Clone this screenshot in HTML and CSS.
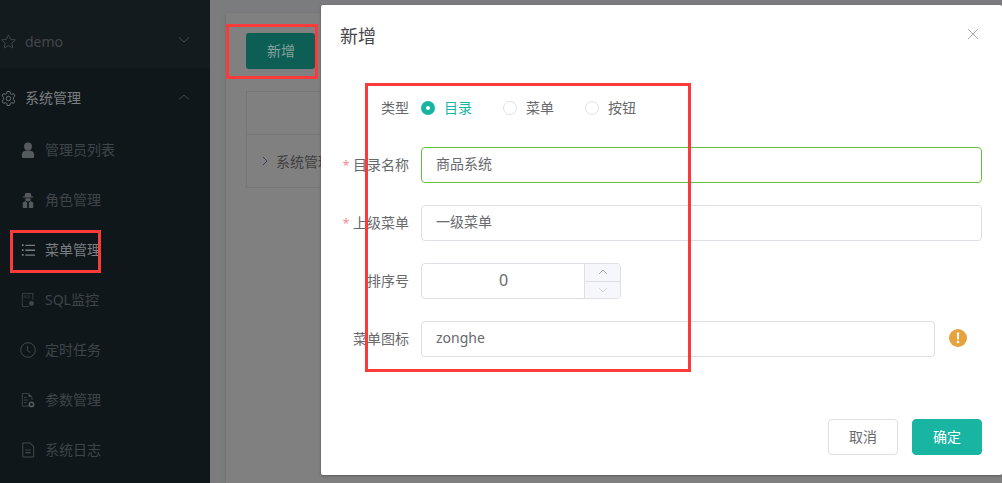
FILE: index.html
```html
<!DOCTYPE html>
<html lang="zh-CN">
<head>
<meta charset="utf-8">
<title>菜单管理</title>
<link rel="stylesheet" href="styles.css">
</head>
<body>
<div class="app">
  <aside class="sidebar">
    <div class="menu-title top">
      <svg class="root-icon" viewBox="0 0 16 16"><path d="M8 .9l2.200 4.700 5.100.7-3.700 3.500 1 5.100L8 12.400l-4.600 2.500 1-5.100L.7 6.300l5.100-.7z" fill="none" stroke="#41484b" stroke-width="1"/></svg>
      <span class="name latin-name">demo</span>
      <svg class="chev" viewBox="0 0 12 8"><path d="M1 1.500l5 4.500 5-4.500" fill="none" stroke="#41484b"/></svg>
    </div>
    <div class="menu-title open">
      <svg class="root-icon" viewBox="0.8 0.3 14.400 15.400"><path d="M6.600.8h2.800l.4 2.100 1.400.8 2-.7 1.400 2.400-1.600 1.400v2.400l1.600 1.400-1.400 2.400-2-.7-1.400.8-.4 2.100H6.600l-.4-2.100-1.400-.8-2 .7-1.400-2.400L3 9.200V6.800L1.400 5.400 2.800 3l2 .7 1.400-.8z" fill="none" stroke="#6d7275" stroke-width="1"/><circle cx="8" cy="8" r="2.300" fill="none" stroke="#6d7275" stroke-width="1"/></svg>
      <span class="name bright">系统管理</span>
      <svg class="chev" viewBox="0 0 12 8"><path d="M1 6.500l5-4.500 5 4.500" fill="none" stroke="#41484b"/></svg>
    </div>
    <nav class="submenu">
      <div class="sub"><svg class="sub-icon" viewBox="0 0 16 18"><circle cx="8" cy="5" r="4.500" fill="#555a5d"/><path d="M1 17v-3c0-3 3-4.500 7-4.500s7 1.500 7 4.500v3c0 .5-.5 1-1 1H2c-.5 0-1-.5-1-1z" fill="#555a5d"/></svg><span class="sub-text">管理员列表</span></div>
      <div class="sub"><svg class="sub-icon" viewBox="0 0 16 18"><path d="M5 1h6l1 4h2v1H2V5h2zM5 7h6v2.500L8 11 5 9.500zM2 12l3-2 2 2v6H3c-.6 0-1-.4-1-1zM14 12l-3-2-2 2v6h4c.6 0 1-.4 1-1z" fill="#555a5d"/></svg><span class="sub-text">角色管理</span></div>
      <div class="sub"><svg class="sub-icon" viewBox="0 0 16 18"><path d="M1 2.500h2v2H1zM5 3h11v1.500H5zM1 8h2v2H1zM5 8.500h11V10H5zM1 13.500h2v2H1zM5 14h11v1.500H5z" fill="#797c7e"/></svg><span class="sub-text hot">菜单管理</span></div>
      <div class="sub"><svg class="sub-icon" viewBox="0 0 16 18"><path d="M1.500 1.500h12v7M9 16.500H1.500v-15" fill="none" stroke="#3f4548"/><circle cx="12" cy="13" r="2.800" fill="#3f4548"/><text class="tiny" x="2.500" y="7">SQL</text></svg><span class="sub-text">SQL监控</span></div>
      <div class="sub"><svg class="clock" viewBox="0 0 16 16"><circle cx="8" cy="8" r="7.300" fill="none" stroke="#43494c" stroke-width="1"/><path d="M7.500 4v4.500l2.500 2" fill="none" stroke="#43494c" stroke-width="1"/></svg><span class="sub-text">定时任务</span></div>
      <div class="sub"><svg class="sub-icon" viewBox="0 0 16 18"><path d="M9 16H1.500V1.500h7l4 4V9" fill="none" stroke="#43494c"/><path d="M8.500 1.500l4 4h-4z" fill="#43494c"/><path d="M3.500 6h3M3.500 9h5M3.500 12h3" stroke="#43494c"/><circle cx="12" cy="14" r="2.500" fill="none" stroke="#555a5d" stroke-width="1.800"/></svg><span class="sub-text">参数管理</span></div>
      <div class="sub"><svg class="sub-icon" viewBox="0 0 16 18"><path d="M2.500 1h8l4 4v11.500c0 .3-.2.500-.5.500H2.500c-.3 0-.5-.2-.5-.5v-15c0-.3.200-.5.500-.5z" fill="none" stroke="#43494c" stroke-width="1.200"/><path d="M5 9h6M5 12h6" stroke="#43494c" stroke-width="1.200"/></svg><span class="sub-text">系统日志</span></div>
    </nav>
  </aside>
  <main class="main">
    <section class="card">
      <button class="add-btn" type="button">新增</button>
      <div class="table">
        <div class="thead"></div>
        <div class="row">
          <svg class="row-chev" viewBox="0 0 6 10"><path d="M1 1l4 4-4 4" fill="none" stroke="#3f4058"/></svg>
          <span class="row-text">系统管理</span>
        </div>
      </div>
    </section>
  </main>

  <div class="modal">
    <header class="modal-head">
      <h2 class="modal-title">新增</h2>
      <svg class="close" viewBox="0 0 12 12"><path d="M1 1l10 10M11 1L1 11" fill="none" stroke="#a9abb5" stroke-width="1"/></svg>
    </header>
    <form class="form">
      <div class="field field-radio">
        <label class="label">类型</label>
        <div class="radios">
          <span class="radio on"><i class="dot checked"></i><span class="radio-text">目录</span></span>
          <span class="radio"><i class="dot"></i><span class="radio-text">菜单</span></span>
          <span class="radio"><i class="dot"></i><span class="radio-text">按钮</span></span>
        </div>
      </div>
      <div class="field">
        <label class="label"><b class="req">*</b> 目录名称</label>
        <div class="input valid">商品系统</div>
      </div>
      <div class="field">
        <label class="label"><b class="req">*</b> 上级菜单</label>
        <div class="input">一级菜单</div>
      </div>
      <div class="field">
        <label class="label">排序号</label>
        <div class="number">
          <div class="num-value">0</div>
          <div class="num-ctrl">
            <span class="step"><svg class="step-icon" viewBox="0 0 10 6"><path d="M1 5l4-4 4 4" fill="none" stroke="#a9abb5"/></svg></span>
            <span class="step"><svg class="step-icon" viewBox="0 0 10 6"><path d="M1 1l4 4 4-4" fill="none" stroke="#d4d6dd"/></svg></span>
          </div>
        </div>
      </div>
      <div class="field">
        <label class="label">菜单图标</label>
        <div class="input latin">zonghe</div>
        <svg class="warn" viewBox="0 0 18 18"><circle cx="9" cy="9" r="9" fill="#e6a23c"/><path d="M7.800 3.500h2.400l-.4 7H8.200z" fill="#fff"/><circle cx="9" cy="13" r="1.300" fill="#fff"/></svg>
      </div>
    </form>
    <footer class="modal-foot">
      <button class="btn" type="button">取消</button>
      <button class="btn primary" type="button">确定</button>
    </footer>
  </div>

  <div class="mark mark-add"></div>
  <div class="mark mark-menu"></div>
  <div class="mark mark-form"></div>
</div>
</body>
</html>
```

FILE: styles.css
```css
* { box-sizing: border-box; }
html, body { margin: 0; padding: 0; height: 100%; overflow: hidden; }
body {
  font-family: "Noto Sans", "Noto Sans CJK SC", sans-serif;
  font-size: 14px;
  background: #7a7c7d;
}
.app { position: relative; display: flex; width: 1002px; height: 483px; overflow: hidden; }

.sidebar { width: 210px; flex: none; background: #10171b; }
.menu-title { display: flex; align-items: center; padding-left: 1px; color: #41474a; }
.menu-title.top { height: 68px; padding-top: 14px; background: #141b1f; }
.menu-title.open { height: 57px; padding-top: 3px; }
.root-icon { width: 15px; height: 15px; flex: none; }
.name { margin-left: 9px; flex: 1; padding-bottom: 2px; }
.latin-name { padding-bottom: 0; }
.bright { color: #7b7f81; }
.chev { width: 12px; height: 8px; margin-right: 20px; margin-top: -3px; flex: none; }
.submenu { display: flex; flex-direction: column; }
.sub { display: flex; align-items: center; height: 50px; padding-left: 21px; color: #3e4548; }
.sub-text { padding-bottom: 2px; }
.sub-icon { width: 14px; height: 16px; flex: none; margin-right: 10px; }
.clock { width: 16px; height: 16px; flex: none; margin: 0 9px 0 -1px; }
.hot { color: #7b7f81; }
.tiny { font-size: 4.500px; fill: #43494c; font-family: "Liberation Sans", sans-serif; }

.main { flex: 1; padding: 13px 0 0 16px; background: #7a7c7d; }
.card { height: 470px; padding: 20px; background: #808080; box-shadow: -1px 0 2px rgba(0,0,0,.08); }
.add-btn {
  display: block; width: 69px; height: 36px; padding: 0 0 2px 1px; border: 0; border-radius: 3px;
  background: #0d5f55; color: #85a29d; font: inherit;
}
.table { margin-top: 22px; border: 1px solid #757677; width: 200px; }
.thead { height: 43px; border-bottom: 1px solid #757677; }
.row { display: flex; align-items: center; height: 52px; padding-left: 15px; color: #3f3f3f; }
.row-chev { width: 6px; height: 10px; margin-right: 8px; flex: none; }
.row-text { white-space: nowrap; }

.modal {
  position: absolute; left: 321px; top: 5px; width: 681px; height: 470px;
  display: flex; flex-direction: column; background: #fff; border-radius: 2px;
  box-shadow: 0 1px 3px rgba(0,0,0,.3);
}
.modal-head { display: flex; align-items: center; justify-content: space-between; height: 62px; padding: 0 23px 0 19px; }
.modal-title { margin: 0 0 2px; font-size: 18px; font-weight: 400; color: #46474a; }
.close { width: 12px; height: 12px; margin-top: -5px; }
.form { display: flex; flex-direction: column; gap: 22px; padding: 23px 20px 0 0; flex: 1; }
.field { display: flex; align-items: center; height: 36px; }
.field-radio { margin-bottom: -1px; }
.label { width: 88px; margin-right: 12px; padding-bottom: 2px; flex: none; text-align: right; color: #67696d; white-space: nowrap; }
.req { font-weight: 400; font-size: 12px; color: #f58a8a; }
.radios { display: flex; gap: 30px; flex: 1; }
.radio { display: flex; align-items: center; width: 52px; color: #67696d; white-space: nowrap; }
.radio.on { color: #18b5a3; }
.radio-text { padding-bottom: 2px; }
.dot { width: 14px; height: 14px; margin-right: 9px; border: 1px solid #dcdfe6; border-radius: 50%; background: #fff; }
.dot.checked { border: 5px solid #18b5a3; }
.input {
  flex: 1; height: 36px; line-height: 32px; padding: 0 14px; border: 1px solid #dcdfe6; border-radius: 4px;
  color: #67696d; background: #fff;
}
.input.valid { border-color: #67c23a; }
.latin { margin-right: 14px; }
.warn { width: 18px; height: 18px; margin-right: 15px; margin-top: -2px; flex: none; }
.number { display: flex; width: 200px; height: 36px; border: 1px solid #dcdfe6; border-radius: 4px; overflow: hidden; }
.num-value { flex: 1; padding-left: 1px; line-height: 32px; text-align: center; color: #67696d; font-size: 16px; }
.num-ctrl { display: flex; flex-direction: column; width: 36px; border-left: 1px solid #dcdfe6; }
.step { flex: 1; display: flex; align-items: center; justify-content: center; background: #f5f7fa; }
.step + .step { border-top: 1px solid #dcdfe6; }
.step-icon { width: 10px; height: 6px; }
.modal-foot { display: flex; justify-content: flex-end; gap: 14px; padding: 0 20px 20px; }
.btn {
  width: 70px; height: 36px; padding: 0 0 2px; border: 1px solid #dcdfe6; border-radius: 4px;
  background: #fff; color: #67696d; font: inherit; font-size: 14px;
}
.btn.primary { border-color: #18b5a3; background: #18b5a3; color: #fff; }

.mark { position: absolute; border: 3px solid #fb3a3a; }
.mark-add { left: 226px; top: 24px; width: 92px; height: 55px; }
.mark-menu { left: 10px; top: 230px; width: 91px; height: 43px; }
.mark-form { left: 365px; top: 83px; width: 326px; height: 289px; }
```
